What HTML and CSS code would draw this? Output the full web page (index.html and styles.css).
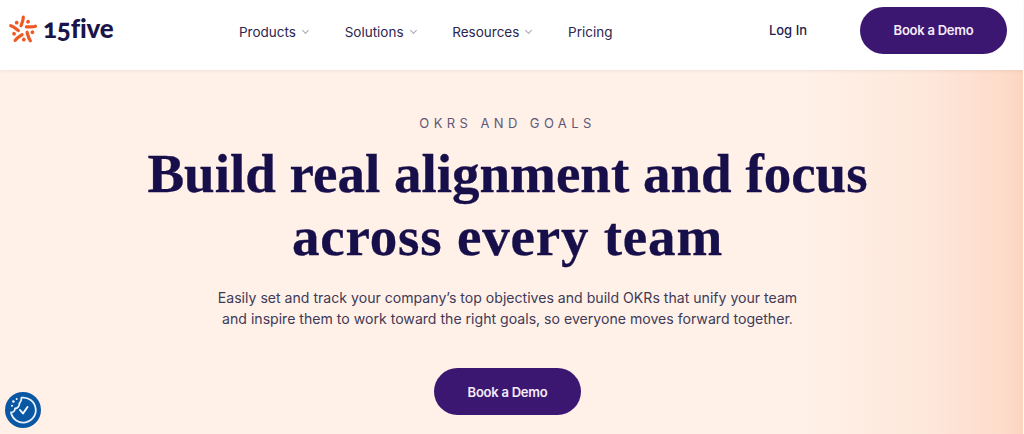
FILE: index.html
```html
<!DOCTYPE html>
<html lang="en">
<head>
    <meta charset="UTF-8">
    <meta name="viewport" content="width=device-width, initial-scale=1.0">
    <title>OKRs and Goals</title>
    <link rel="stylesheet" href="styles.css">
</head>
<body>
    <header class="header">
        <a class="logo" href="#">
            <svg class="logo-mark" viewBox="0 0 30 30" width="30" height="30">
                <defs>
                    <g id="petal">
                        <path d="M13 10.800C14 8 15.500 5 15.300 2" fill="none" stroke="#ee5a24" stroke-width="3.200" stroke-linecap="round"/>
                        <circle cx="8.700" cy="7.700" r="1.900" fill="#ee5a24"/>
                    </g>
                </defs>
                <use href="#petal"/>
                <use href="#petal" transform="rotate(72 15 15)"/>
                <use href="#petal" transform="rotate(144 15 15)"/>
                <use href="#petal" transform="rotate(216 15 15)"/>
                <use href="#petal" transform="rotate(288 15 15)"/>
            </svg>
            <span class="logo-text">15five</span>
        </a>
        <nav class="nav">
            <a class="nav-link" href="#">Products <span class="chevron"></span></a>
            <a class="nav-link" href="#">Solutions <span class="chevron"></span></a>
            <a class="nav-link" href="#">Resources <span class="chevron"></span></a>
            <a class="nav-link" href="#">Pricing</a>
        </nav>
        <div class="header-actions">
            <a class="login" href="#">Log In</a>
            <a class="btn" href="#">Book a Demo</a>
        </div>
    </header>

    <main class="hero">
        <p class="eyebrow">OKRS AND GOALS</p>
        <h1>Build real alignment and focus<br><span class="line-two">across every team</span></h1>
        <p class="description">Easily set and track your company’s top objectives and build OKRs that unify your team<br>and inspire them to work toward the right goals, so everyone moves forward together.</p>
        <a class="btn btn-hero" href="#">Book a Demo</a>
    </main>

    <button class="consent" aria-label="Cookie settings">
        <svg viewBox="0 0 36 36" width="36" height="36">
            <circle cx="18" cy="18" r="18" fill="#0a57a4"/>
            <path d="M16.500 5.700A12.500 12.500 0 1 1 6 20.500C8 20.500 10 19 10 16.500C12.500 16.500 14.800 14 14.300 11.500C15.800 10 16.500 8 16.500 5.700Z" fill="none" stroke="#e8f1fa" stroke-width="1.800" stroke-linejoin="round"/>
            <path d="M15 18L18 21.500L22.500 15" fill="none" stroke="#fff" stroke-width="1.900" stroke-linecap="round" stroke-linejoin="round"/>
            <g fill="#fff">
                <circle cx="8.400" cy="9.500" r="1.300"/>
                <circle cx="11.700" cy="7" r="1"/>
                <circle cx="7" cy="13.800" r="1"/>
            </g>
        </svg>
    </button>
</body>
</html>
```

FILE: styles.css
```css
* {
    box-sizing: border-box;
}

html, body {
    height: 100%;
}

body {
    margin: 0;
    padding-right: 1px;
    font-family: 'Inter', sans-serif;
    color: #170f49;
    background: #fff;
    overflow: hidden;
    display: flex;
    flex-direction: column;
}

a {
    color: inherit;
    text-decoration: none;
}

.header {
    height: 70px;
    flex-shrink: 0;
    background: #fff;
    display: flex;
    align-items: center;
    padding: 0 16px 10px 8px;
    box-shadow: 0 1px 3px rgba(60, 40, 40, 0.08);
    position: relative;
}

.logo {
    display: flex;
    align-items: center;
    gap: 5px;
    width: 231px;
    height: 60px;
}

.logo-text {
    font-family: 'Lato', sans-serif;
    font-size: 26px;
    font-weight: 900;
    font-feature-settings: "onum";
    color: #1b1449;
    letter-spacing: -0.2px;
    margin-top: -5px;
}

.nav {
    display: flex;
    align-items: center;
    gap: 34.700px;
    font-size: 13.500px;
    color: #2c2650;
    margin-top: 4px;
}

.nav-link {
    display: flex;
    align-items: center;
    gap: 5px;
}

.chevron {
    width: 5px;
    height: 5px;
    border-right: 1px solid #a9a7b5;
    border-bottom: 1px solid #a9a7b5;
    transform: rotate(45deg);
    margin: -3px 2px 0 2px;
}

.header-actions {
    margin-left: auto;
    display: flex;
    align-items: center;
    gap: 53px;
}

.login {
    font-size: 13px;
    font-weight: 500;
    color: #241c52;
}

.btn {
    display: inline-flex;
    align-items: center;
    justify-content: center;
    width: 147px;
    height: 47px;
    border-radius: 24px;
    background: #3b1772;
    color: #f5ecf8;
    font-size: 13px;
    font-weight: 600;
    letter-spacing: -0.25px;
}

.hero {
    flex: 1;
    display: flex;
    flex-direction: column;
    align-items: center;
    text-align: center;
    background: linear-gradient(90deg, #fff1e8 0%, #fff1e8 78%, #fee8dc 90%, #fddcca 98%, #fcd5c1 100%);
    padding: 45px 8px 0 0;
}

.eyebrow {
    margin: 0;
    font-size: 13px;
    line-height: 16px;
    letter-spacing: 4.400px;
    color: #5f5876;
}

h1 {
    margin: 11px 0 0;
    font-family: 'Liberation Serif', serif;
    font-size: 55px;
    line-height: 63px;
    font-weight: 700;
    color: #170f49;
    -webkit-text-stroke: 0.3px #170f49;
}

.line-two {
    letter-spacing: 0.800px;
}

.description {
    margin: 19px 0 0;
    font-size: 14.100px;
    line-height: 21px;
    color: #403a58;
}

.btn-hero {
    margin-top: 39px;
}

.consent {
    position: absolute;
    left: 5px;
    top: 392px;
    width: 36px;
    height: 36px;
    padding: 0;
    border: none;
    background: none;
}
```
